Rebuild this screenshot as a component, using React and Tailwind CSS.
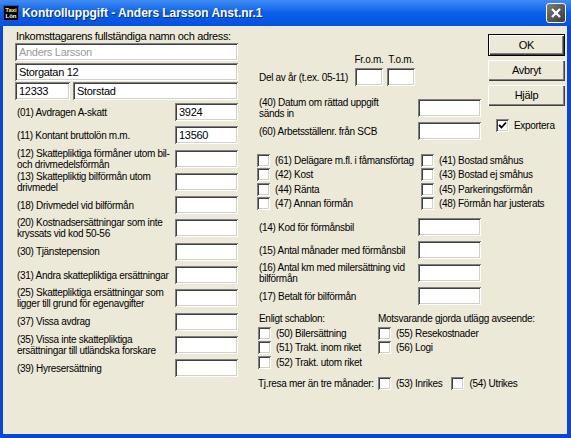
import React from "react";

const sunken =
  "bg-white shadow-[inset_1px_1px_0_#808080,inset_-1px_-1px_0_#ffffff,inset_2px_2px_0_#404040,inset_-2px_-2px_0_#d4d0c8]";

const Input = ({ value = "", className = "", muted = false }) => (
  <div
    className={`${sunken} h-[18px] shrink-0 flex items-center pl-[4px] text-[11px] ${
      muted ? "text-[#9a9a9a]" : "text-black"
    } ${className}`}
  >
    {value}
  </div>
);

const Check = ({ checked = false }) => (
  <div className={`${sunken} w-[13px] h-[13px] shrink-0 flex items-center justify-center`}>
    {checked && (
      <svg width="9" height="9" viewBox="0 0 9 9">
        <path d="M1 4 L3.5 6.5 L8 1.5" stroke="#000" strokeWidth="1.8" fill="none" />
      </svg>
    )}
  </div>
);

const CheckItem = ({ label, checked, className = "" }) => (
  <div className={`flex items-center h-[14.5px] shrink-0 ${className}`}>
    <Check checked={checked} />
    <span className="ml-[5px] whitespace-nowrap">{label}</span>
  </div>
);

const Row = ({ label, value }) => (
  <div className="flex items-center justify-between h-[18px]">
    <div className="pl-[2px] leading-[11px] whitespace-nowrap">{label}</div>
    <Input value={value} className="w-[63px]" />
  </div>
);

const Btn = ({ children, def = false }) => (
  <div
    className={`w-[77px] flex items-center justify-center bg-[#ece9d8] text-[11px] shadow-[inset_1px_1px_0_#ffffff,inset_-1px_-1px_0_#404040,inset_-2px_-2px_0_#808080] ${
      def ? "h-[22px] border border-black" : "h-[21px]"
    }`}
  >
    {children}
  </div>
);

export default function App() {
  return (
    <div
      className="w-[571px] h-[438px] flex flex-col bg-[#0846d8] text-[10px] text-black tracking-[-0.3px]"
      style={{ fontFamily: '"Liberation Sans", Arial, sans-serif' }}
    >
      {/* title bar */}
      <div className="h-[26px] flex items-center bg-gradient-to-b from-[#3f8cf3] via-[#0a5fe8] to-[#0552e0] px-[3px]">
        <div className="w-[16px] h-[16px] bg-black border border-[#2a4fb8] flex flex-col items-center justify-center text-[6px] leading-[6px] font-bold tracking-normal">
          <span className="text-[#ffe97a]">Taxi</span>
          <span className="text-white">Lön</span>
        </div>
        <div className="ml-[3px] text-white font-bold text-[12px] tracking-[-0.05px] [text-shadow:1px_1px_0_#0a2a8a]">
          Kontrolluppgift - Anders Larsson Anst.nr.1
        </div>
        <div className="ml-auto mr-[2px] w-[20px] h-[20px] rounded-[3px] border border-white bg-gradient-to-br from-[#7c7c7c] to-[#3c3c3c] flex items-center justify-center">
          <svg width="12" height="12" viewBox="0 0 12 12">
            <path d="M2 2 L10 10 M10 2 L2 10" stroke="#fff" strokeWidth="2.2" />
          </svg>
        </div>
      </div>

      {/* body */}
      <div className="flex-1 ml-[3px] mr-[4px] mb-[4px] bg-[#ece9d8] flex pl-[12px] pt-[3px] border-b border-[#f4efc8]">
        {/* left column */}
        <div className="w-[223px] shrink-0 flex flex-col">
          <div className="h-[14px] leading-[14px] pl-[1px] text-[11px] tracking-[-0.35px]">
            Inkomsttagarens fullständiga namn och adress:
          </div>
          <Input value="Anders Larsson" muted />
          <Input value="Storgatan 12" className="mt-[2px]" />
          <div className="flex mt-[1px] gap-[3px]">
            <Input value="12333" className="w-[55px]" />
            <Input value="Storstad" className="flex-1" />
          </div>
          <div className="flex flex-col gap-[5.3px] mt-[3px]">
            <Row label="(01) Avdragen A-skatt" value="3924" />
            <Row label="(11) Kontant bruttolön m.m." value="13560" />
            <Row label={<>(12) Skattepliktiga förmåner utom bil-<br />och drivmedelsförmån</>} />
            <Row label={<>(13) Skattepliktig bilförmån utom<br />drivmedel</>} />
            <Row label="(18) Drivmedel vid bilförmån" />
            <Row label={<>(20) Kostnadsersättningar som inte<br />kryssats vid kod 50-56</>} />
            <Row label="(30) Tjänstepension" />
            <Row label="(31) Andra skattepliktiga ersättningar" />
            <Row label={<>(25) Skattepliktiga ersättningar som<br />ligger till grund för egenavgifter</>} />
            <Row label="(37) Vissa avdrag" />
            <Row label={<>(35) Vissa inte skattepliktiga<br />ersättningar till utländska forskare</>} />
            <Row label="(39) Hyresersättning" />
          </div>
        </div>

        {/* middle column */}
        <div className="w-[224px] shrink-0 ml-[19px] flex flex-col pt-[24px]">
          <div className="flex items-end">
            <div className="pl-[2px] h-[18px] flex items-center whitespace-nowrap">Del av år (t.ex. 05-11)</div>
            <div className="flex flex-col items-center ml-[7px] w-[28px]">
              <span className="h-[15px] leading-[13px] whitespace-nowrap">Fr.o.m.</span>
              <Input className="w-[28px]" />
            </div>
            <div className="flex flex-col items-center ml-[4px] w-[28px]">
              <span className="h-[15px] leading-[13px] whitespace-nowrap">T.o.m.</span>
              <Input className="w-[28px]" />
            </div>
          </div>

          <div className="flex flex-col gap-[5px] mt-[13px]">
            <Row label={<>(40) Datum om rättad uppgift<br />sänds in</>} />
            <Row label="(60) Arbetsställenr. från SCB" />
          </div>

          <div className="flex mt-[13px]">
            <div className="w-[164px] shrink-0 flex flex-col">
              <CheckItem label="(61) Delägare m.fl. i fåmansförtag" />
              <CheckItem label="(42) Kost" />
              <CheckItem label="(44) Ränta" />
              <CheckItem label="(47) Annan förmån" />
            </div>
            <div className="flex flex-col">
              <CheckItem label="(41) Bostad småhus" />
              <CheckItem label="(43) Bostad ej småhus" />
              <CheckItem label="(45) Parkeringsförmån" />
              <CheckItem label="(48) Förmån har justerats" />
            </div>
          </div>

          <div className="flex flex-col gap-[5px] mt-[7px]">
            <Row label="(14) Kod för förmånsbil" />
            <Row label="(15) Antal månader med förmånsbil" />
            <Row label={<>(16) Antal km med milersättning vid<br />bilförmån</>} />
            <Row label="(17) Betalt för bilförmån" />
          </div>

          <div className="flex mt-[7px]">
            <div className="w-[121px] shrink-0 flex flex-col pl-[1px]">
              <div className="h-[14px] leading-[14px] pl-[1px]">Enligt schablon:</div>
              <CheckItem label="(50) Bilersättning" />
              <CheckItem label="(51) Trakt. inom riket" />
              <CheckItem label="(52) Trakt. utom riket" />
            </div>
            <div className="flex flex-col">
              <div className="h-[14px] leading-[14px] whitespace-nowrap">Motsvarande gjorda utlägg avseende:</div>
              <CheckItem label="(55) Resekostnader" />
              <CheckItem label="(56) Logi" />
            </div>
          </div>

          <div className="flex items-center mt-[7px] h-[14.5px]">
            <span className="pl-[1px] w-[121px] shrink-0 whitespace-nowrap">Tj.resa mer än tre månader:</span>
            <CheckItem label="(53) Inrikes" />
            <CheckItem label="(54) Utrikes" className="ml-[9px]" />
          </div>
        </div>

        {/* buttons */}
        <div className="ml-[7px] shrink-0 flex flex-col pt-[5px]">
          <Btn def>OK</Btn>
          <div className="mt-[4px]">
            <Btn>Avbryt</Btn>
          </div>
          <div className="mt-[4px]">
            <Btn>Hjälp</Btn>
          </div>
          <CheckItem label="Exportera" checked className="mt-[12px] ml-[8px]" />
        </div>
      </div>
    </div>
  );
}
